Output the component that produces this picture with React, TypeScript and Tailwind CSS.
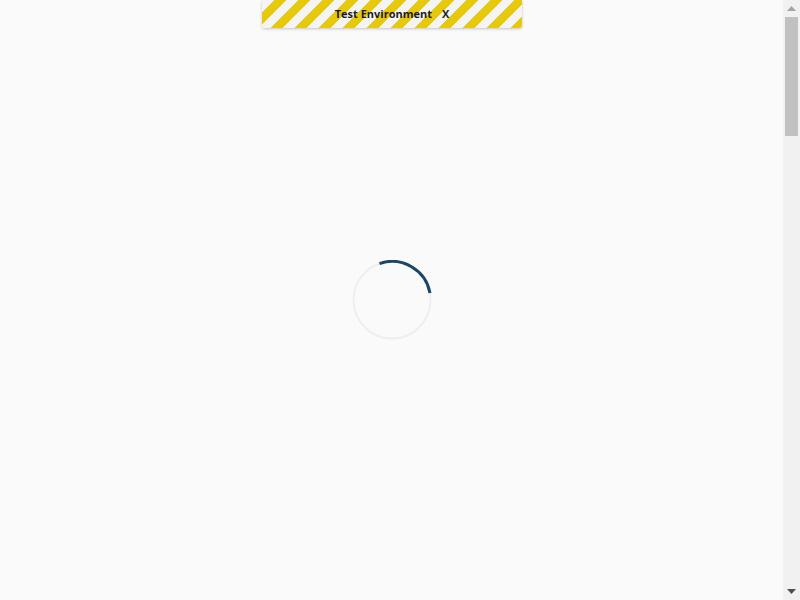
export default function App() {
  return (
    <div className="relative h-[600px] overflow-hidden bg-[#fafafa] font-['Open_Sans',sans-serif]">
      {/* test environment banner */}
      <div className="absolute top-0 left-[262px] w-[260px] h-[28px] rounded-b-[3px] shadow-[0_1px_3px_rgba(0,0,0,0.22)] bg-[repeating-linear-gradient(135deg,#f4f4f4_0_8.5px,#e6c80c_8.5px_17px)] flex items-center justify-center gap-[10px] text-[11px] font-bold text-[#1c1c1c]">
        <span>Test Environment</span>
        <span>X</span>
      </div>

      {/* loading spinner */}
      <div className="absolute inset-y-0 left-0 w-[783px] flex items-center justify-center">
        <svg width="80" height="80" viewBox="0 0 80 80">
          <circle cx="40" cy="40" r="38.5" fill="none" stroke="#eeeeee" strokeWidth="2" />
          <path
            d="M 27.5 3.6 A 38.5 38.5 0 0 1 78 33"
            fill="none"
            stroke="#1b4666"
            strokeWidth="3"
          />
        </svg>
      </div>

      {/* page scrollbar */}
      <div className="absolute top-0 right-0 w-[17px] h-full bg-[#f1f1f1] flex flex-col items-center">
        <div className="h-[17px] flex items-center justify-center">
          <svg width="9" height="5" viewBox="0 0 9 5">
            <path d="M4.5 0 L9 5 L0 5 Z" fill="#a3a3a3" />
          </svg>
        </div>
        <div className="w-[13px] h-[119px] bg-[#c1c1c1]" />
        <div className="flex-1" />
        <div className="h-[17px] flex items-center justify-center">
          <svg width="9" height="5" viewBox="0 0 9 5">
            <path d="M0 0 L9 0 L4.5 5 Z" fill="#505050" />
          </svg>
        </div>
      </div>
    </div>
  );
}
